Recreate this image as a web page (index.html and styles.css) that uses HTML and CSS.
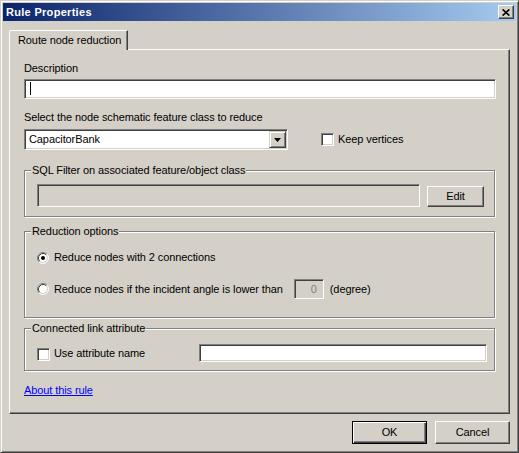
FILE: index.html
```html
<!DOCTYPE html>
<html lang="en">
<head>
    <meta charset="UTF-8">
    <title>Rule Properties</title>
    <link rel="stylesheet" href="styles.css">
</head>
<body>
    <div class="window">
        <div class="titlebar">
            <span class="title">Rule Properties</span>
            <span class="close-btn">
                <svg width="8" height="7" viewBox="0 0 8 7">
                    <path d="M0.6 0.4 L7.4 6.6 M7.4 0.4 L0.6 6.6" stroke="#000" stroke-width="1.6" fill="none"/>
                </svg>
            </span>
        </div>
        <div class="client">
            <div class="tabs">
                <div class="tab">Route node reduction</div>
            </div>
            <div class="page">
                <div class="label">Description</div>
                <div class="textbox desc"><span class="caret"></span></div>

                <div class="label label-class">Select the node schematic feature class to reduce</div>
                <div class="class-row">
                    <div class="combo">
                        <span class="combo-text">CapacitorBank</span>
                        <span class="combo-btn">
                            <svg width="7" height="4" viewBox="0 0 7 4"><path d="M0 0 H7 L3.5 4 Z" fill="#000"/></svg>
                        </span>
                    </div>
                    <span class="checkbox keep"></span>
                    <span>Keep vertices</span>
                </div>

                <fieldset class="group sql">
                    <legend>SQL Filter on associated feature/object class</legend>
                    <div class="group-body sql-body">
                        <div class="textbox disabled sql-box"></div>
                        <div class="button edit">Edit</div>
                    </div>
                </fieldset>

                <fieldset class="group reduction">
                    <legend>Reduction options</legend>
                    <div class="group-body reduction-body">
                        <div class="radio-row">
                            <svg class="radio" width="12" height="12" viewBox="0 0 12 12">
                                <circle cx="6" cy="6" r="5" fill="#fff"/>
                                <path d="M2.11 9.89 A5.5 5.5 0 0 1 9.89 2.11" stroke="#808080" fill="none"/>
                                <path d="M9.89 2.11 A5.5 5.5 0 0 1 2.11 9.89" stroke="#fff" fill="none"/>
                                <path d="M2.82 9.18 A4.5 4.5 0 0 1 9.18 2.82" stroke="#404040" fill="none"/>
                                <path d="M9.18 2.82 A4.5 4.5 0 0 1 2.82 9.18" stroke="#d4d0c8" fill="none"/>
                                <circle cx="6" cy="6" r="2" fill="#000"/>
                            </svg>
                            <span>Reduce nodes with 2 connections</span>
                        </div>
                        <div class="radio-row angle-row">
                            <svg class="radio" width="12" height="12" viewBox="0 0 12 12">
                                <circle cx="6" cy="6" r="5" fill="#fff"/>
                                <path d="M2.11 9.89 A5.5 5.5 0 0 1 9.89 2.11" stroke="#808080" fill="none"/>
                                <path d="M9.89 2.11 A5.5 5.5 0 0 1 2.11 9.89" stroke="#fff" fill="none"/>
                                <path d="M2.82 9.18 A4.5 4.5 0 0 1 9.18 2.82" stroke="#404040" fill="none"/>
                                <path d="M9.18 2.82 A4.5 4.5 0 0 1 2.82 9.18" stroke="#d4d0c8" fill="none"/>
                            </svg>
                            <span>Reduce nodes if the incident angle is lower than</span>
                            <div class="textbox disabled angle-box">0</div>
                            <span>(degree)</span>
                        </div>
                    </div>
                </fieldset>

                <fieldset class="group link-attr">
                    <legend>Connected link attribute</legend>
                    <div class="group-body link-body">
                        <span class="checkbox use-attr"></span>
                        <span class="use-label">Use attribute name</span>
                        <div class="textbox attr-box"></div>
                    </div>
                </fieldset>

                <a class="about" href="#">About this rule</a>
            </div>
            <div class="buttons">
                <div class="button default">OK</div>
                <div class="button">Cancel</div>
            </div>
        </div>
    </div>
</body>
</html>
```
FILE: styles.css
```css
* {
    box-sizing: border-box;
}
body {
    margin: 0;
    font-family: "Liberation Sans", Arial, sans-serif;
    font-size: 11px;
    line-height: 13px;
    letter-spacing: -0.1px;
    color: #000;
    background: #d4d0c8;
}
.window {
    width: 519px;
    height: 453px;
    background: #d4d0c8;
    border: 1px solid;
    border-color: #d4d0c8 #404040 #404040 #d4d0c8;
    box-shadow: inset 1px 1px #fff, inset -1px -1px #808080;
    padding: 2px;
    display: flex;
    flex-direction: column;
}
.titlebar {
    height: 18px;
    background: linear-gradient(to right, #0a246a, #a6caf0);
    display: flex;
    align-items: center;
    justify-content: space-between;
    padding: 0 2px 0 3px;
}
.title {
    color: #fff;
    font-weight: bold;
    letter-spacing: 0.3px;
}
.close-btn {
    width: 16px;
    height: 14px;
    background: #d4d0c8;
    border: 1px solid;
    border-color: #fff #404040 #404040 #fff;
    box-shadow: inset -1px -1px #808080;
    display: flex;
    align-items: center;
    justify-content: center;
    padding-right: 1px;
}
.client {
    flex: 1;
    padding: 9px 6px 6px 6px;
    display: flex;
    flex-direction: column;
}
.tabs {
    display: flex;
}
.tab {
    position: relative;
    z-index: 1;
    width: 119px;
    height: 20px;
    margin-bottom: -1px;
    padding: 3px 0 0 8px;
    background: #d4d0c8;
    border-left: 1px solid #fff;
    border-top: 1px solid #fff;
    border-right: 1px solid #404040;
    border-top-left-radius: 2px;
    box-shadow: inset -1px 0 #808080;
}
.page {
    border: 1px solid;
    border-color: #fff #404040 #404040 #fff;
    box-shadow: inset -1px -1px #808080;
    padding: 12px 13px 16px 14px;
    display: flex;
    flex-direction: column;
}
.label-class {
    margin-top: 12px;
}
.textbox {
    background: #fff;
    border: 1px solid;
    border-color: #808080 #fff #fff #808080;
    box-shadow: inset 1px 1px #404040, inset -1px -1px #d4d0c8;
}
.textbox.disabled {
    background: #d4d0c8;
    color: #808080;
}
.desc {
    margin-top: 4px;
    height: 20px;
    padding: 2px 0 0 5px;
}
.caret {
    display: block;
    width: 1px;
    height: 13px;
    background: #000;
}
.class-row {
    margin-top: 5px;
    display: flex;
    align-items: center;
}
.combo {
    width: 264px;
    height: 21px;
    background: #fff;
    border: 1px solid;
    border-color: #808080 #fff #fff #808080;
    box-shadow: inset 1px 1px #404040, inset -1px -1px #d4d0c8;
    padding: 1px;
    display: flex;
    align-items: center;
}
.combo-text {
    flex: 1;
    padding-left: 3px;
}
.combo-btn {
    width: 17px;
    height: 17px;
    background: #d4d0c8;
    border: 1px solid;
    border-color: #d4d0c8 #404040 #404040 #d4d0c8;
    box-shadow: inset 1px 1px #fff, inset -1px -1px #808080;
    display: flex;
    align-items: center;
    justify-content: center;
}
.checkbox {
    width: 13px;
    height: 13px;
    flex: none;
    background: #fff;
    border: 1px solid;
    border-color: #808080 #fff #fff #808080;
    box-shadow: inset 1px 1px #404040, inset -1px -1px #d4d0c8;
}
.keep {
    margin: 0 4px 0 33px;
}
.group {
    margin: 0 1px 0 0;
    padding: 0;
    min-inline-size: 0;
    border: 1px solid #808080;
    box-shadow: inset 1px 1px #fff, 1px 1px #fff;
}
.group legend {
    margin-left: 6px;
    padding: 0 1px;
    line-height: 13px;
    background: #d4d0c8;
}
.group-body {
    padding-left: 12px;
}
.sql {
    margin-top: 14px;
}
.sql-body {
    display: flex;
    align-items: flex-start;
    padding-top: 7px;
    padding-bottom: 9px;
}
.sql-box {
    width: 383px;
    height: 23px;
}
.button {
    width: 75px;
    height: 23px;
    background: #d4d0c8;
    border: 1px solid;
    border-color: #fff #404040 #404040 #fff;
    box-shadow: inset -1px -1px #808080;
    display: flex;
    align-items: center;
    justify-content: center;
}
.button.edit {
    width: 57px;
    height: 21px;
    margin: 2px 0 0 7px;
}
.button.default {
    border-color: #000;
    box-shadow: inset 1px 1px #fff, inset -1px -1px #404040, inset -2px -2px #808080;
}
.reduction {
    margin-top: 8px;
}
.reduction-body {
    padding-top: 13px;
    padding-bottom: 18px;
}
.radio-row {
    display: flex;
    align-items: center;
    height: 13px;
}
.radio {
    flex: none;
    margin-right: 5px;
}
.angle-row {
    margin-top: 15px;
    height: 20px;
}
.angle-box {
    width: 30px;
    height: 20px;
    margin: 0 6px 0 11px;
    padding: 0 6px 0 0;
    display: flex;
    align-items: center;
    justify-content: flex-end;
}
.link-attr {
    margin-top: 4px;
}
.link-body {
    display: flex;
    align-items: flex-start;
    padding-top: 9px;
    padding-bottom: 8px;
    padding-right: 7px;
}
.use-attr {
    margin-top: 4px;
}
.use-label {
    margin: 3px 0 0 4px;
}
.attr-box {
    width: 288px;
    height: 18px;
    margin-left: auto;
}
.about {
    margin-top: 13px;
    align-self: flex-start;
    color: #0000ff;
    text-decoration: underline;
}
.buttons {
    margin-top: 7px;
    display: flex;
    justify-content: flex-end;
    gap: 8px;
}
```
